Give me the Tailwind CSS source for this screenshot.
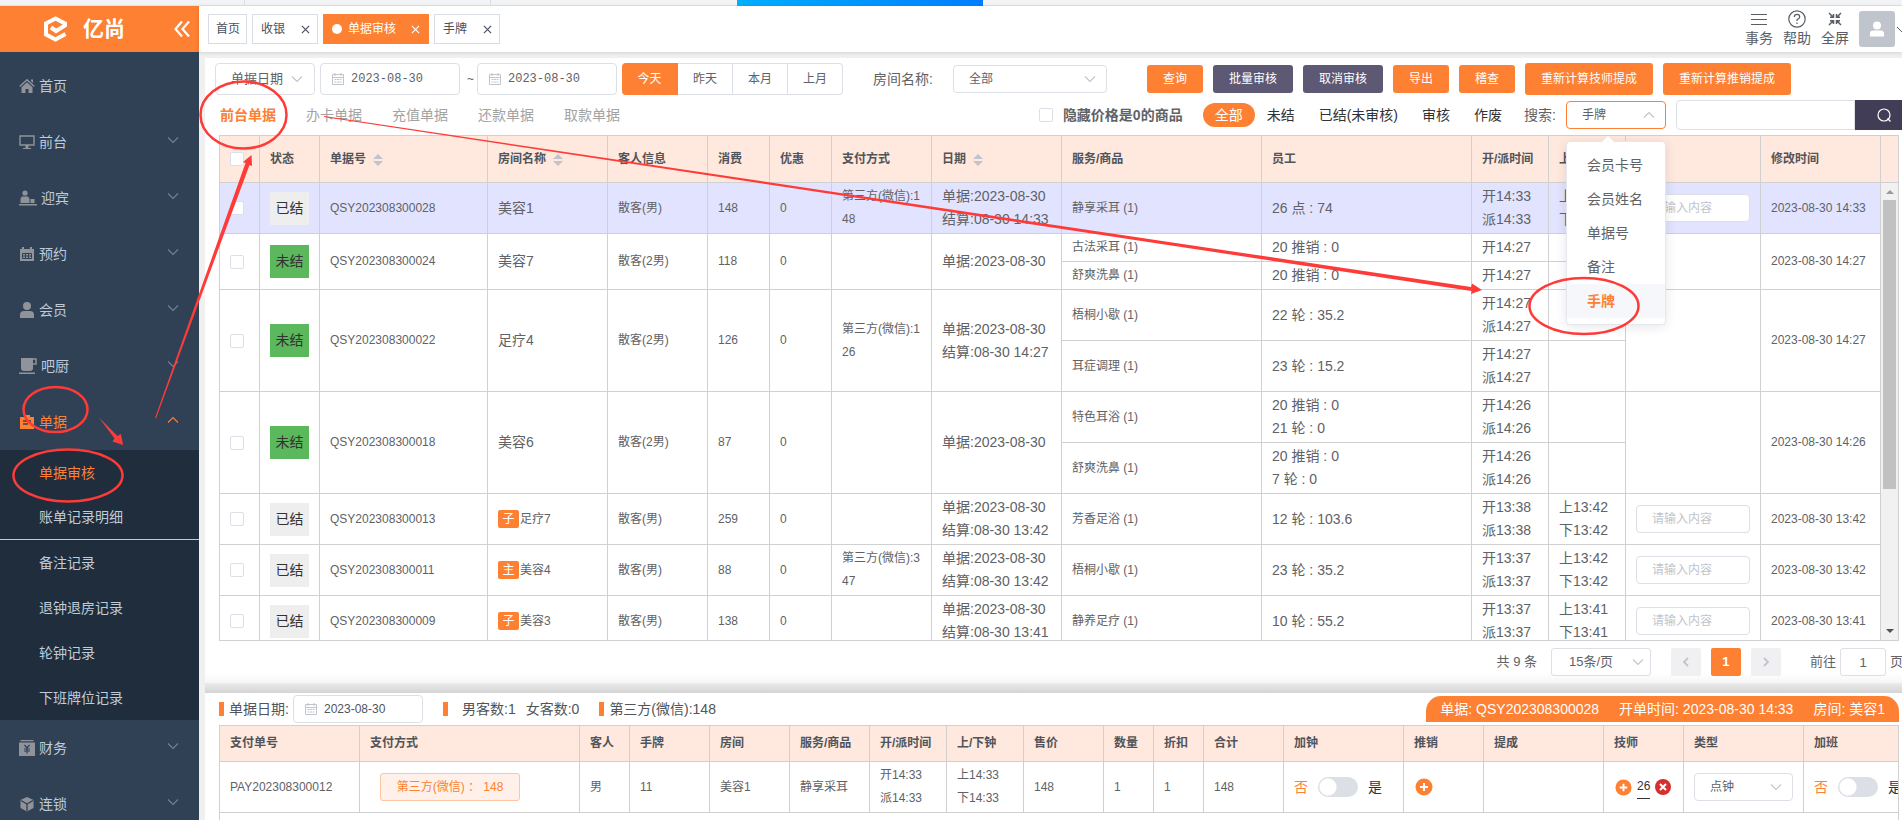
<!DOCTYPE html>
<html lang="zh-CN">
<head>
<meta charset="utf-8">
<title>单据审核</title>
<script src="https://cdn.jsdelivr.net/npm/@tailwindcss/browser@4"></script>
</head>
<body class="relative flex h-screen flex-col overflow-hidden bg-[#f0f0f0] font-['Liberation_Sans','Noto_Sans_CJK_SC',sans-serif] text-sm text-[#606266]">

<svg class="hidden">
  <symbol id="down" viewBox="0 0 12 12"><path d="M1 3.5 6 8.5 11 3.5" fill="none" stroke="currentColor" stroke-width="1.1"/></symbol>
  <symbol id="up" viewBox="0 0 12 12"><path d="M1 8.5 6 3.5 11 8.5" fill="none" stroke="currentColor" stroke-width="1.1"/></symbol>
  <symbol id="sort" viewBox="0 0 10 12"><path d="M5 0 10 5H0zM0 7h10L5 12z" fill="#c0c4cc"/></symbol>
  <symbol id="close" viewBox="0 0 10 10"><path d="M1 1 9 9M9 1 1 9" fill="none" stroke="currentColor" stroke-width="1.3"/></symbol>
  <symbol id="cal" viewBox="0 0 14 14"><path d="M1.5 2.5h11v10h-11zM1.5 5.5h11M4 1v3M10 1v3" fill="none" stroke="#c0c4cc"/><path d="M3.5 7.5h7M3.5 10h7" stroke="#c0c4cc" stroke-dasharray="2 .6"/></symbol>
  <symbol id="plus" viewBox="0 0 18 18"><circle cx="9" cy="9" r="8.5" fill="#fd8033"/><path d="M9 5v8M5 9h8" stroke="#fff" stroke-width="2"/></symbol>
</svg>

<div class="flex h-[6px] shrink-0 border-b border-[#e1e2e4] bg-[#f2f3f5]" aria-hidden="true">
  <span class="w-[245px] border-r border-[#dcdee0]"></span>
  <span class="w-[246px] border-r border-[#dcdee0]"></span>
  <span class="w-[246px]"></span>
  <span class="h-[6px] w-[246px] bg-linear-to-r from-[#00aeff] to-[#007dff]"></span>
</div>

<div class="flex min-h-0 flex-1">
  <aside class="flex w-[199px] shrink-0 flex-col overflow-hidden bg-[#304156]">
    <div class="flex h-[46px] shrink-0 items-center bg-[#fd8033] pl-[43px] pr-[9px] text-white">
      <svg class="h-[26px] w-[25px]" viewBox="0 0 24 26"><path d="M7.5 11.5 12.5 15 21.5 9.5V7.5L12 2.5 2.5 7.5v11L12 23.500l10-5.500" fill="none" stroke="#fff" stroke-width="4"/></svg>
      <span class="ml-[15px] text-[21px] font-bold">亿尚</span>
      <button class="ml-auto" aria-label="收起菜单"><svg class="size-4" viewBox="0 0 16 16"><path d="M8 .5 1.500 8 8 15.500M15 .5 8.500 8 15 15.500" fill="none" stroke="#fff" stroke-width="2.200"/></svg></button>
    </div>
    <nav class="pt-[6px] text-[#bfcbd9] [&>a]:flex [&>a]:h-14 [&>a]:items-center [&>a]:gap-1 [&>a]:pl-[19px] [&>a]:pr-5">
      <a href="#"><svg class="size-4 text-[#909399]" viewBox="0 0 16 16" fill="currentColor"><path d="M8 .8 15.800 8l-1 1L8 2.800 1.200 9l-1-1zM12 1.500h2V5l-2-2zM8 4.200l5.500 5V15H9.500v-4h-3v4h-4V9.200z"/></svg>首页</a>
      <a href="#"><svg class="size-4 text-[#909399]" viewBox="0 0 16 16"><path d="M1 2h14v9H1z" fill="none" stroke="currentColor" stroke-width="1.400"/><path d="M6.500 11h3v3h-3zM4 14h8v1H4z" fill="currentColor"/></svg>前台<svg class="mb-[5px] ml-auto size-3 text-[#76808f]"><use href="#down"/></svg></a>
      <a href="#"><svg class="h-4 w-[18px] text-[#909399]" viewBox="0 0 18 16" fill="currentColor"><circle cx="6" cy="3" r="2.600"/><path d="M1.500 13V8.500L3 6.500h6l1.500 2V13zM11.500 9h4v4h-4zM0 14h18v1.500H0z"/></svg>迎宾<svg class="mb-[5px] ml-auto size-3 text-[#76808f]"><use href="#down"/></svg></a>
      <a href="#"><svg class="size-4 text-[#909399]" viewBox="0 0 16 16"><path d="M1 3h14v12H1zM3 1h2v3H3zM11 1h2v3h-2z" fill="currentColor"/><path d="M3.500 7.500h9v5h-9zM3.500 10h9M6.500 7.500v5M9.500 7.500v5" fill="none" stroke="#304156"/></svg>预约<svg class="mb-[5px] ml-auto size-3 text-[#76808f]"><use href="#down"/></svg></a>
      <a href="#"><svg class="size-4 text-[#909399]" viewBox="0 0 16 16" fill="currentColor"><circle cx="8" cy="4" r="4"/><path d="M1 16v-3q0-4 4-4h6q4 0 4 4v3z"/></svg>会员<svg class="mb-[5px] ml-auto size-3 text-[#76808f]"><use href="#down"/></svg></a>
      <a href="#"><svg class="h-4 w-[18px] text-[#909399]" viewBox="0 0 18 16"><path d="M2 0h12v10q0 3-3 3H5q-3 0-3-3zM0 14.500h16V16H0z" fill="currentColor"/><path d="M14 1h3v5h-3" fill="none" stroke="currentColor" stroke-width="1.500"/></svg>吧厨<svg class="mb-[5px] ml-auto size-3 text-[#76808f]"><use href="#down"/></svg></a>
      <a href="#" class="text-[#fd8033]"><svg class="size-4" viewBox="0 0 16 16"><path d="M1 3h4V1h6v2h4v12H1z" fill="currentColor"/><path d="M4 7h8M4 10h5" stroke="#304156" stroke-width="1.300"/></svg>单据<svg class="mb-[5px] ml-auto size-3"><use href="#up"/></svg></a>
      <div class="bg-[#1f2d3d] [&>a]:flex [&>a]:h-[45px] [&>a]:items-center [&>a]:pl-[39px]">
        <a href="#" class="text-[#fd8033]">单据审核</a>
        <a href="#" class="border-b border-[#bfcbd9]">账单记录明细</a>
        <a href="#">备注记录</a>
        <a href="#">退钟退房记录</a>
        <a href="#">轮钟记录</a>
        <a href="#">下班牌位记录</a>
      </div>
      <a href="#"><svg class="size-4 text-[#909399]" viewBox="0 0 16 16"><path d="M1.500 0h13v1.200h-13zM0 2.500h16V16H0z" fill="currentColor"/><path d="M5.500 5 8 8l2.500-3M8 8v5.500M5 9h6M5 11h6" fill="none" stroke="#304156" stroke-width="1.200"/></svg>财务<svg class="mb-[5px] ml-auto size-3 text-[#76808f]"><use href="#down"/></svg></a>
      <a href="#"><svg class="size-4 text-[#909399]" viewBox="0 0 16 16"><path d="M8 1 14.500 4v8L8 15.500 1.500 12V4z" fill="currentColor"/><path d="M2 4.500 8 8l6-3.500M8 8v7" fill="none" stroke="#304156" stroke-width="1.300"/></svg>连锁<svg class="mb-[5px] ml-auto size-3 text-[#76808f]"><use href="#down"/></svg></a>
    </nav>
  </aside>

  <div class="flex min-w-0 flex-1 flex-col">
    <header class="flex h-[46px] shrink-0 items-center bg-white shadow-[0_1px_4px_rgba(0,0,0,0.12)]">
      <div class="ml-[9px] flex gap-[5px] text-xs text-[#495060] [&>button]:flex [&>button]:h-[30px] [&>button]:items-center [&>button]:border [&>button]:border-[#d8dce5]">
        <button class="pl-[7px] pr-[6px]">首页</button>
        <button class="pl-2 pr-[7px]">收银<svg class="ml-4 size-[9px]"><use href="#close"/></svg></button>
        <button class="border-[#fd8033]! bg-[#fd8033] pl-2 pr-[8px] text-white"><i class="mr-[6px] size-[10px] rounded-full bg-white"></i>单据审核<svg class="ml-[15px] size-[9px]"><use href="#close"/></svg></button>
        <button class="pl-2 pr-[7px]">手牌<svg class="ml-4 size-[9px]"><use href="#close"/></svg></button>
      </div>
      <div class="ml-auto flex items-center gap-[10px] text-[#5a5e66] [&>button]:flex [&>button]:flex-col [&>button]:items-center [&>button]:leading-5">
        <button><svg class="size-[18px]" viewBox="0 0 18 18"><path d="M1 4.500h16M1 9.500h16M1 14.500h16" stroke="currentColor" stroke-width="1.200"/></svg>事务</button>
        <button><svg class="size-[18px]" viewBox="0 0 18 18" fill="none" stroke="currentColor" stroke-width="1.200"><circle cx="9" cy="9" r="8.200"/><path d="M6.300 7q0-2.700 2.700-2.700T11.700 7Q11.700 8.400 9 9.800V11M9 12.500v1.400"/></svg>帮助</button>
        <button><svg class="size-[18px]" viewBox="0 0 18 18" fill="none" stroke="currentColor" stroke-width="1.500"><path d="M3 3 7 7M4 7.200h3.500V4M15 3 11 7M14 7.200h-3.500V4M3 15l4-4M4 10.800h3.500V14M15 15l-4-4M14 10.800h-3.500V14"/></svg>全屏</button>
        <span class="flex size-9 items-center justify-center rounded-[3px] bg-[#c0c4cc]"><svg class="size-4" viewBox="0 0 16 16" fill="#fff"><circle cx="8" cy="4.500" r="4"/><path d="M1 15.500v-3q0-3 3.500-3h7q3.500 0 3.500 3v3z"/></svg></span>
        <svg class="-ml-2 h-3 w-[5px]" viewBox="0 0 5 12"><path d="M0 4 5 9" stroke="#606266" fill="none"/></svg>
      </div>
    </header>

    <main class="ml-[6px] mt-[6px] flex min-h-0 flex-1 flex-col overflow-hidden bg-white">
      <section class="flex min-h-0 flex-1 flex-col pt-[5px]">
        <div class="flex h-8 shrink-0 items-center pl-[10px] text-xs [&>*]:shrink-0">
          <div class="relative w-[100px]">
            <select aria-label="日期类型" class="h-8 w-full appearance-none rounded border border-[#dcdfe6] pl-[15px] text-[13px]"><option>单据日期</option></select>
            <svg class="absolute right-3 top-[10px] size-3 text-[#c0c4cc]"><use href="#down"/></svg>
          </div>
          <label class="ml-[5px] flex h-8 w-[140px] items-center rounded border border-[#dcdfe6] pl-[10px]"><svg class="size-[14px]"><use href="#cal"/></svg><input aria-label="开始日期" value="2023-08-30" class="ml-[6px] w-[90px] font-['Liberation_Mono',monospace] text-xs"></label>
          <span class="w-[17px] pl-[7px]">~</span>
          <label class="flex h-8 w-[140px] items-center rounded border border-[#dcdfe6] pl-[10px]"><svg class="size-[14px]"><use href="#cal"/></svg><input aria-label="结束日期" value="2023-08-30" class="ml-[6px] w-[90px] font-['Liberation_Mono',monospace] text-xs"></label>
          <div class="ml-[5px] flex [&>button]:h-8 [&>button]:border-y [&>button]:border-r [&>button]:border-[#dcdfe6]">
            <button class="w-14 rounded-l border-[#fd8033]! bg-[#fd8033] text-white">今天</button>
            <button class="w-[55px]">昨天</button>
            <button class="w-[55px]">本月</button>
            <button class="w-[55px] rounded-r">上月</button>
          </div>
          <label for="room" class="ml-[30px] w-[80px] text-sm">房间名称:</label>
          <div class="relative w-[154px]">
            <select id="room" class="h-7 w-full appearance-none rounded border border-[#dcdfe6] pl-[15px]"><option>全部</option></select>
            <svg class="absolute right-[11px] top-2 size-3 text-[#c0c4cc]"><use href="#down"/></svg>
          </div>
          <div class="ml-10 flex items-center gap-[10px] text-white [&>button]:rounded-[3px] [&>button]:bg-[#fd8033] [&>button]:px-4">
            <button class="h-7">查询</button>
            <button class="h-7 bg-[#5d5873]!">批量审核</button>
            <button class="h-7 bg-[#5d5873]!">取消审核</button>
            <button class="h-7">导出</button>
            <button class="h-7">稽查</button>
            <button class="h-8">重新计算技师提成</button>
            <button class="h-8">重新计算推销提成</button>
          </div>
        </div>

        <div class="flex h-10 shrink-0 items-center pl-[15px] [&>*]:shrink-0">
          <div class="flex gap-[30px] text-[#a3a3a3]">
            <a href="#" class="font-bold text-[#fd8033]">前台单据</a>
            <a href="#">办卡单据</a>
            <a href="#">充值单据</a>
            <a href="#">还款单据</a>
            <a href="#">取款单据</a>
          </div>
          <label class="ml-auto flex items-center gap-[10px] font-bold"><input type="checkbox" class="size-[14px] appearance-none rounded-[2px] border border-[#dcdfe6]">隐藏价格是0的商品</label>
          <div class="ml-5 flex text-[#333] [&>button]:h-6 [&>button]:px-3">
            <button class="rounded-xl bg-[#fd8033] text-white">全部</button>
            <button>未结</button>
            <button>已结(未审核)</button>
            <button>审核</button>
            <button>作废</button>
          </div>
          <label for="kind" class="ml-[10px] w-[42px]">搜索:</label>
          <div class="relative w-[100px]">
            <select id="kind" class="block h-7 w-full appearance-none rounded border border-[#fd8033] pl-[15px] text-xs"><option>手牌</option></select>
            <svg class="absolute right-[11px] top-2 size-3 text-[#c0c4cc]"><use href="#up"/></svg>
            <div class="absolute left-0 top-10 z-20 w-[100px] rounded border border-[#e4e7ed] bg-white py-[6px] shadow-[0_2px_12px_rgba(0,0,0,0.1)] [&>button]:block [&>button]:h-[34px] [&>button]:w-full [&>button]:pl-5 [&>button]:text-left">
              <svg class="absolute -top-[6px] left-[35px] h-[6px] w-3" viewBox="0 0 12 6"><path d="M0 6 6 0 12 6z" fill="#fff"/></svg>
              <button>会员卡号</button>
              <button>会员姓名</button>
              <button>单据号</button>
              <button>备注</button>
              <button class="bg-[#f5f7fa] font-bold text-[#fd8033]">手牌</button>
            </div>
          </div>
          <input aria-label="搜索内容" class="ml-[10px] h-[30px] w-[179px] rounded-l border border-[#dcdfe6] px-3">
          <button aria-label="搜索" class="h-[30px] w-[47px] bg-[#423d57] pl-[22px]"><svg class="size-[14px]" viewBox="0 0 14 14" fill="none" stroke="#fff" stroke-width="1.200"><circle cx="7" cy="7" r="6"/><path d="M10.500 10.500 13.500 13.500"/></svg></button>
        </div>

        <div class="ml-[14px] mr-[3px] flex min-h-0 flex-1 flex-col border border-[#d0d0d0] text-xs">
          <div class="flex shrink-0 bg-[#ffe8de]">
            <table class="min-w-0 flex-1 table-fixed border-separate border-spacing-0 text-left text-[#515459] [&_th]:h-[47px] [&_th]:border-b [&_th]:border-r [&_th]:border-[#d0d0d0] [&_th]:px-[10px] [&_th]:whitespace-nowrap">
              <colgroup><col class="w-10"><col class="w-[60px]"><col class="w-[168px]"><col class="w-[120px]"><col class="w-[100px]"><col class="w-[62px]"><col class="w-[62px]"><col class="w-[100px]"><col class="w-[130px]"><col class="w-[200px]"><col><col class="w-[77px]"><col class="w-[77px]"><col class="w-[135px]"><col class="w-[120px]"></colgroup>
              <tr>
                <th><input type="checkbox" aria-label="全选" class="block size-[14px] appearance-none rounded-[2px] border border-[#dcdfe6] bg-white"></th>
                <th>状态</th>
                <th>单据号<svg class="ml-[7px] inline h-3 w-[10px]"><use href="#sort"/></svg></th>
                <th>房间名称<svg class="ml-[7px] inline h-3 w-[10px]"><use href="#sort"/></svg></th>
                <th>客人信息</th><th>消费</th><th>优惠</th><th>支付方式</th>
                <th>日期<svg class="ml-[7px] inline h-3 w-[10px]"><use href="#sort"/></svg></th>
                <th>服务/商品</th><th>员工</th><th>开/派时间</th><th>上/下钟</th><th>备注</th><th>修改时间</th>
              </tr>
            </table>
            <div class="w-[17px] border-b border-[#d0d0d0]"></div>
          </div>
          <div class="flex min-h-0 flex-1 items-stretch overflow-hidden">
            <div class="min-w-0 flex-1 overflow-hidden">
            <table class="w-full table-fixed border-separate border-spacing-0 [&_input[type=checkbox]]:block [&_input[type=checkbox]]:size-[14px] [&_input[type=checkbox]]:appearance-none [&_input[type=checkbox]]:rounded-[2px] [&_input[type=checkbox]]:border [&_input[type=checkbox]]:border-[#dcdfe6] [&_input[type=checkbox]]:bg-white [&_input[type=text]]:block [&_input[type=text]]:h-7 [&_input[type=text]]:w-full [&_input[type=text]]:rounded [&_input[type=text]]:border [&_input[type=text]]:border-[#dcdfe6] [&_input[type=text]]:bg-white [&_input[type=text]]:pl-[15px] [&_input[type=text]]:placeholder:text-[#c0c4cc] [&_td]:border-b [&_td]:border-r [&_td]:border-[#d0d0d0] [&_td]:px-[10px] [&_td]:py-[2px] [&_td]:leading-[23px] [&_b]:block [&_b]:h-[33px] [&_b]:w-[39px] [&_b]:text-center [&_b]:text-sm [&_b]:leading-[33px] [&_b]:font-normal [&_b]:text-[#333] [&_em]:mr-px [&_em]:inline-block [&_em]:h-[18px] [&_em]:w-[21px] [&_em]:rounded-[2px] [&_em]:bg-[#fd8033] [&_em]:text-center [&_em]:leading-[18px] [&_em]:text-white [&_em]:not-italic">
              <colgroup><col class="w-10"><col class="w-[60px]"><col class="w-[168px]"><col class="w-[120px]"><col class="w-[100px]"><col class="w-[62px]"><col class="w-[62px]"><col class="w-[100px]"><col class="w-[130px]"><col class="w-[200px]"><col><col class="w-[77px]"><col class="w-[77px]"><col class="w-[135px]"><col class="w-[120px]"></colgroup>
              <tr class="h-[51px] bg-[#e2e4ff]">
                <td><input type="checkbox" aria-label="选择"></td><td><b class="bg-[#eee]">已结</b></td><td>QSY202308300028</td><td class="text-sm">美容1</td><td>散客(男)</td><td>148</td><td>0</td><td class="break-all">第三方(微信):148</td><td class="whitespace-nowrap text-sm">单据:2023-08-30<br>结算:08-30 14:33</td><td>静享采耳 (1)</td><td class="text-sm">26 点 : 74</td><td class="text-sm">开14:33<br>派14:33</td><td class="text-sm">上14:33<br>下14:33</td><td><input type="text" aria-label="备注" placeholder="请输入内容"></td><td class="whitespace-nowrap">2023-08-30 14:33</td>
              </tr>
              <tr class="h-7">
                <td rowspan="2"><input type="checkbox" aria-label="选择"></td><td rowspan="2"><b class="bg-[#5cb85c]">未结</b></td><td rowspan="2">QSY202308300024</td><td rowspan="2" class="text-sm">美容7</td><td rowspan="2">散客(2男)</td><td rowspan="2">118</td><td rowspan="2">0</td><td rowspan="2"></td><td rowspan="2" class="whitespace-nowrap text-sm">单据:2023-08-30</td><td>古法采耳 (1)</td><td class="text-sm">20 推销 : 0</td><td class="text-sm">开14:27</td><td></td><td rowspan="2"></td><td rowspan="2" class="whitespace-nowrap">2023-08-30 14:27</td>
              </tr>
              <tr class="h-7"><td>舒爽洗鼻 (1)</td><td class="text-sm">20 推销 : 0</td><td class="text-sm">开14:27</td><td></td></tr>
              <tr class="h-[51px]">
                <td rowspan="2"><input type="checkbox" aria-label="选择"></td><td rowspan="2"><b class="bg-[#5cb85c]">未结</b></td><td rowspan="2">QSY202308300022</td><td rowspan="2" class="text-sm">足疗4</td><td rowspan="2">散客(2男)</td><td rowspan="2">126</td><td rowspan="2">0</td><td rowspan="2" class="break-all">第三方(微信):126</td><td rowspan="2" class="whitespace-nowrap text-sm">单据:2023-08-30<br>结算:08-30 14:27</td><td>梧桐小歇 (1)</td><td class="text-sm">22 轮 : 35.2</td><td class="text-sm">开14:27<br>派14:27</td><td></td><td rowspan="2"></td><td rowspan="2" class="whitespace-nowrap">2023-08-30 14:27</td>
              </tr>
              <tr class="h-[51px]"><td>耳症调理 (1)</td><td class="text-sm">23 轮 : 15.2</td><td class="text-sm">开14:27<br>派14:27</td><td></td></tr>
              <tr class="h-[51px]">
                <td rowspan="2"><input type="checkbox" aria-label="选择"></td><td rowspan="2"><b class="bg-[#5cb85c]">未结</b></td><td rowspan="2">QSY202308300018</td><td rowspan="2" class="text-sm">美容6</td><td rowspan="2">散客(2男)</td><td rowspan="2">87</td><td rowspan="2">0</td><td rowspan="2"></td><td rowspan="2" class="whitespace-nowrap text-sm">单据:2023-08-30</td><td>特色耳浴 (1)</td><td class="text-sm">20 推销 : 0<br>21 轮 : 0</td><td class="text-sm">开14:26<br>派14:26</td><td></td><td rowspan="2"></td><td rowspan="2" class="whitespace-nowrap">2023-08-30 14:26</td>
              </tr>
              <tr class="h-[51px]"><td>舒爽洗鼻 (1)</td><td class="text-sm">20 推销 : 0<br>7 轮 : 0</td><td class="text-sm">开14:26<br>派14:26</td><td></td></tr>
              <tr class="h-[51px]">
                <td><input type="checkbox" aria-label="选择"></td><td><b class="bg-[#eee]">已结</b></td><td>QSY202308300013</td><td><em>子</em>足疗7</td><td>散客(男)</td><td>259</td><td>0</td><td></td><td class="whitespace-nowrap text-sm">单据:2023-08-30<br>结算:08-30 13:42</td><td>芳香足浴 (1)</td><td class="text-sm">12 轮 : 103.6</td><td class="text-sm">开13:38<br>派13:38</td><td class="text-sm">上13:42<br>下13:42</td><td><input type="text" aria-label="备注" placeholder="请输入内容"></td><td class="whitespace-nowrap">2023-08-30 13:42</td>
              </tr>
              <tr class="h-[51px]">
                <td><input type="checkbox" aria-label="选择"></td><td><b class="bg-[#eee]">已结</b></td><td>QSY202308300011</td><td><em>主</em>美容4</td><td>散客(男)</td><td>88</td><td>0</td><td class="break-all">第三方(微信):347</td><td class="whitespace-nowrap text-sm">单据:2023-08-30<br>结算:08-30 13:42</td><td>梧桐小歇 (1)</td><td class="text-sm">23 轮 : 35.2</td><td class="text-sm">开13:37<br>派13:37</td><td class="text-sm">上13:42<br>下13:42</td><td><input type="text" aria-label="备注" placeholder="请输入内容"></td><td class="whitespace-nowrap">2023-08-30 13:42</td>
              </tr>
              <tr class="h-[51px]">
                <td><input type="checkbox" aria-label="选择"></td><td><b class="bg-[#eee]">已结</b></td><td>QSY202308300009</td><td><em>子</em>美容3</td><td>散客(男)</td><td>138</td><td>0</td><td></td><td class="whitespace-nowrap text-sm">单据:2023-08-30<br>结算:08-30 13:41</td><td>静养足疗 (1)</td><td class="text-sm">10 轮 : 55.2</td><td class="text-sm">开13:37<br>派13:37</td><td class="text-sm">上13:41<br>下13:41</td><td><input type="text" aria-label="备注" placeholder="请输入内容"></td><td class="whitespace-nowrap">2023-08-30 13:41</td>
              </tr>
            </table>
            </div>
            <div class="flex w-[17px] flex-col items-center bg-[#f1f1f1]" aria-hidden="true">
              <svg class="h-[17px] w-3 shrink-0" viewBox="0 0 12 17"><path d="M2 11h8L6 7z" fill="#9a9a9a"/></svg>
              <div class="h-[289px] w-[13px] bg-[#c1c1c1]"></div>
              <svg class="mt-auto h-[17px] w-3 shrink-0" viewBox="0 0 12 17"><path d="M2 6h8L6 10z" fill="#505050"/></svg>
            </div>
          </div>
        </div>

        <div class="flex h-[42px] shrink-0 items-start justify-end overflow-hidden bg-linear-to-b from-white from-75% to-[#f6f6f6] pt-[7px] text-[13px] [&>*]:shrink-0 [&>button]:flex [&>button]:h-7 [&>button]:w-[30px] [&>button]:items-center [&>button]:justify-center [&>button]:rounded-[2px]">
          <span class="mr-[14px] leading-7">共 9 条</span>
          <div class="relative w-[100px]">
            <select aria-label="每页条数" class="h-7 w-full appearance-none rounded-[3px] border border-[#dcdfe6] pl-[17px] text-[13px]"><option>15条/页</option></select>
            <svg class="absolute right-[7px] top-2 size-3 text-[#c0c4cc]"><use href="#down"/></svg>
          </div>
          <button aria-label="上一页" class="ml-5 bg-[#f0f0f2]"><svg class="size-3" viewBox="0 0 12 12"><path d="M8 2 4 6l4 4" fill="none" stroke="#c0c4cc" stroke-width="1.800"/></svg></button>
          <button class="ml-[10px] bg-[#fd8033] font-bold text-white">1</button>
          <button aria-label="下一页" class="ml-[10px] bg-[#f0f0f2]"><svg class="size-3" viewBox="0 0 12 12"><path d="M4 2 8 6l-4 4" fill="none" stroke="#c0c4cc" stroke-width="1.800"/></svg></button>
          <label for="page" class="ml-[29px] leading-7">前往</label>
          <input id="page" value="1" class="ml-1 h-7 w-[46px] rounded-[3px] border border-[#dcdfe6] text-center">
          <span class="ml-1 w-3 leading-7">页</span>
        </div>
      </section>

      <section class="flex h-[137px] shrink-0 flex-col">
        <div class="h-[10px] shrink-0 bg-linear-to-b from-[#ebebeb] to-[#d4d4d4]"></div>
        <div class="flex h-8 shrink-0 items-center pl-[14px] pr-[3px] text-[#515459]">
          <i class="h-[14px] w-[5px] bg-[#fd8033]"></i>
          <label for="bill" class="ml-[5px] w-16">单据日期:</label>
          <div class="flex h-7 w-[130px] items-center rounded border border-[#dcdfe6] pl-[10px]"><svg class="size-[14px]"><use href="#cal"/></svg><input id="bill" value="2023-08-30" class="ml-[6px] w-20 text-xs"></div>
          <i class="ml-5 h-[14px] w-[5px] bg-[#fd8033]"></i>
          <span class="ml-[14px]">男客数:1</span><span class="ml-[10px]">女客数:0</span>
          <i class="ml-5 h-[14px] w-[5px] bg-[#fd8033]"></i>
          <span class="ml-[5px]">第三方(微信):148</span>
          <div class="ml-auto flex h-[26px] items-center gap-5 rounded-t-[15px] bg-[#fd8033] px-[14px] text-white"><span>单据: QSY202308300028</span><span>开单时间: 2023-08-30 14:33</span><span>房间: 美容1</span></div>
        </div>
        <div class="ml-[14px] mr-[3px] min-h-0 flex-1 overflow-hidden border-x border-t border-[#d0d0d0] text-xs">
          <table class="w-full table-fixed border-separate border-spacing-0 text-left leading-[23px] [&_td]:border-b [&_td]:border-r [&_td]:border-[#d0d0d0] [&_td]:px-[10px] [&_td]:py-[2px] [&_th]:h-9 [&_th]:border-b [&_th]:border-r [&_th]:border-[#d0d0d0] [&_th]:bg-[#ffe8de] [&_th]:px-[10px] [&_th]:whitespace-nowrap [&_th]:text-[#515459] [&_tr>:last-child]:border-r-0">
            <colgroup><col class="w-[140px]"><col class="w-[220px]"><col class="w-[50px]"><col class="w-20"><col class="w-20"><col class="w-20"><col class="w-[77px]"><col class="w-[77px]"><col class="w-20"><col class="w-[50px]"><col class="w-[50px]"><col class="w-20"><col class="w-[120px]"><col class="w-20"><col class="w-[120px]"><col class="w-20"><col class="w-[120px]"><col></colgroup>
            <tr><th>支付单号</th><th>支付方式</th><th>客人</th><th>手牌</th><th>房间</th><th>服务/商品</th><th>开/派时间</th><th>上/下钟</th><th>售价</th><th>数量</th><th>折扣</th><th>合计</th><th>加钟</th><th>推销</th><th>提成</th><th>技师</th><th>类型</th><th>加班</th></tr>
            <tr class="h-[51px]">
              <td>PAY202308300012</td>
              <td><button class="ml-[10px] block h-7 w-[140px] rounded-[3px] border border-[#fec5a3] bg-[#fff1e9] text-[#fd8033]">第三方(微信) ： 148</button></td>
              <td>男</td><td>11</td><td>美容1</td><td>静享采耳</td><td>开14:33<br>派14:33</td><td>上14:33<br>下14:33</td><td>148</td><td>1</td><td>1</td><td>148</td>
              <td><label class="flex items-center gap-[10px] whitespace-nowrap text-sm text-[#333]"><span class="text-[#fd8033]">否</span><input type="checkbox" class="h-5 w-10 shrink-0 appearance-none rounded-full bg-[#dcdfe6] bg-[radial-gradient(circle_at_10px_10px,white_8px,transparent_9px)]">是</label></td>
              <td><button aria-label="添加推销" class="ml-px block"><svg class="size-[18px]"><use href="#plus"/></svg></button></td>
              <td></td>
              <td><div class="flex items-center gap-[5px]"><button aria-label="添加技师" class="ml-px"><svg class="block size-[17px]"><use href="#plus"/></svg></button><span class="border-b border-[#333] text-[#333]">26</span><button aria-label="移除技师"><svg class="block size-4" viewBox="0 0 16 16"><circle cx="8" cy="8" r="8" fill="#d3302f"/><path d="M5 5l6 6M11 5l-6 6" stroke="#fff" stroke-width="2"/></svg></button></div></td>
              <td><div class="relative"><select aria-label="类型" class="block h-7 w-full appearance-none rounded border border-[#dcdfe6] pl-[15px]"><option>点钟</option></select><svg class="absolute right-[11px] top-2 size-3 text-[#c0c4cc]"><use href="#down"/></svg></div></td>
              <td class="overflow-hidden"><label class="flex items-center gap-[10px] whitespace-nowrap text-sm text-[#333]"><span class="text-[#fd8033]">否</span><input type="checkbox" class="h-5 w-10 shrink-0 appearance-none rounded-full bg-[#dcdfe6] bg-[radial-gradient(circle_at_10px_10px,white_8px,transparent_9px)]">是</label></td>
            </tr>
          </table>
        </div>
      </section>
    </main>
  </div>
</div>

<!-- Red guide marks drawn over the page -->
<svg class="pointer-events-none absolute left-0 top-0 z-30" width="1902" height="820" viewBox="0 0 1902 820" aria-hidden="true">
  <g fill="none" stroke="#fe3b38" stroke-width="2.500">
    <ellipse cx="243.500" cy="115" rx="43" ry="33.500"/>
    <ellipse cx="55.500" cy="409.500" rx="32" ry="22.500"/>
    <ellipse cx="68" cy="475.500" rx="54.500" ry="26"/>
    <ellipse cx="1584" cy="306" rx="54.500" ry="28"/>
  </g>
  <g fill="#fe3b38">
    <path d="M155 418 245.500 163 243 162 251.500 155 252 166 249.500 165 156 418.500z"/>
    <path d="M324 116 1471 287 1472 283.500 1482 290 1471 294 1471.500 291 324 117z"/>
    <path d="M98.500 417 117.500 436 121 434 123 445 112.500 441.500 114.500 438.500z"/>
  </g>
</svg>
</body>
</html>
